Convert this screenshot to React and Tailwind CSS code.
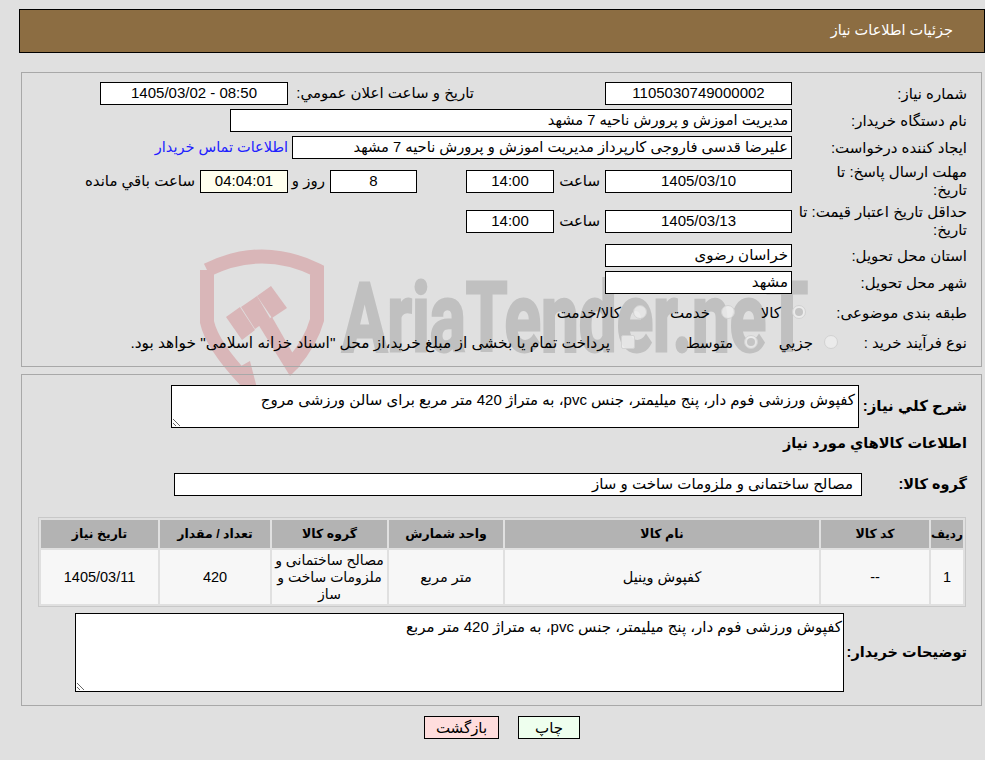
const fontStack = { fontFamily: '"Liberation Sans", "DejaVu Sans", sans-serif' };

function Box({ className = "", bg = "bg-white", children }) {
  return (
    <div className={`flex h-[23px] shrink-0 items-center justify-center whitespace-nowrap border border-black text-[15px] ${bg} ${className}`}>
      {children}
    </div>
  );
}

function Label({ children }) {
  return <div className="w-[175px] shrink-0 text-[15px] leading-[18px]">{children}</div>;
}

function Radio({ checked }) {
  return (
    <span className="mb-[2px] flex h-[14px] w-[14px] shrink-0 items-center justify-center rounded-full border border-[#d2d2d2] bg-[#ededed]/80">
      {checked && <span className="h-[8px] w-[8px] rounded-full bg-[#c4c4c4]" />}
    </span>
  );
}

function Watermark() {
  return (
    <svg className="absolute left-0 top-0" width="985" height="400" viewBox="0 0 985 400">
      <g fill="none" stroke="#d9b6b8" strokeWidth="14">
        <path d="M207 270 Q262 243 317 270 L317 320 Q311 342 292 364" />
        <path d="M207 270 L207 322 Q212 345 245 380" />
      </g>
      <g fill="#d9b6b8">
        <polygon points="226,317 240,307 255,330 242,340" />
        <polygon points="241,307 257,296 270,318 255,329" />
        <polygon points="257,296 271,286 287,308 272,318" />
        <polygon points="258,324 272,317 300,366 290,376" />
        <polygon points="241,366 250,361 257,388 240,388" />
      </g>
      <text
        direction="ltr"
        x="342"
        y="351"
        textLength="466"
        lengthAdjust="spacingAndGlyphs"
        fontFamily="Roboto, sans-serif"
        fontWeight="700"
        fontSize="96"
        fill="#c0c0c0"
        stroke="#c0c0c0"
        strokeWidth="3"
      >
        AriaTender.neT
      </text>
    </svg>
  );
}

const columns = [
  { title: "ردیف", width: "w-[32px]", head: "text-[12px]", cell: "text-[14.5px]", value: "1" },
  { title: "کد کالا", width: "w-[108px]", head: "text-[12.5px]", cell: "text-[14.5px]", value: "--" },
  { title: "نام کالا", width: "w-[314px]", head: "text-[12.5px]", cell: "text-[14.5px]", value: "کفپوش وینیل" },
  { title: "واحد شمارش", width: "w-[114px]", head: "text-[12.5px]", cell: "text-[14.5px]", value: "متر مربع" },
  { title: "گروه کالا", width: "w-[115px]", head: "text-[12.5px]", cell: "text-[14px] whitespace-pre-line", value: "مصالح ساختمانی و\nملزومات ساخت و\nساز" },
  { title: "تعداد / مقدار", width: "w-[110px]", head: "text-[12.5px]", cell: "text-[14.5px]", value: "420" },
  { title: "تاریخ نیاز", width: "w-[117px]", head: "text-[12.5px]", cell: "text-[14.5px]", value: "1405/03/11" },
];

export default function App() {
  return (
    <div dir="rtl" style={fontStack} className="relative h-[760px] w-[985px] overflow-hidden bg-[#e0e0e0] text-[15px] text-black">
      <Watermark />

      <div className="relative">
        <div className="ml-[19px] mt-[9px] flex h-[44px] items-center border border-black bg-[#8c6d42] pr-[31px] text-[14.5px] text-white">
          جزئیات اطلاعات نیاز
        </div>

        <div className="ml-[21px] mr-[3px] mt-[19px] flex h-[295px] flex-col border border-[#a8a8a8] pr-[14px] pt-[9px]">
          <div className="flex h-[23px] items-center">
            <Label>شماره نیاز:</Label>
            <Box className="w-[187px]">1105030749000002</Box>
            <div className="mr-[131px] w-[181px] whitespace-nowrap">تاریخ و ساعت اعلان عمومي:</div>
            <Box className="mr-[5px] w-[188px]"><span dir="ltr">1405/03/02 - 08:50</span></Box>
          </div>

          <div className="mt-[4px] flex h-[23px] items-center">
            <Label>نام دستگاه خریدار:</Label>
            <Box className="w-[562px] !justify-start pr-[3px] !text-[14.7px]">مدیریت اموزش و پرورش ناحیه 7 مشهد</Box>
          </div>

          <div className="mt-[4px] flex h-[23px] items-center">
            <Label>ایجاد کننده درخواست:</Label>
            <Box className="w-[500px] !justify-start pr-[3px] !text-[14.7px]">علیرضا قدسی فاروجی کارپرداز مدیریت اموزش و پرورش ناحیه 7 مشهد</Box>
            <a href="#" className="mr-[4px] whitespace-nowrap text-[14.5px] text-[#2020ff]">اطلاعات تماس خریدار</a>
          </div>

          <div className="mt-[4px] flex h-[36px] items-center">
            <Label>مهلت ارسال پاسخ: تا<br />تاریخ:</Label>
            <Box className="w-[187px]">1405/03/10</Box>
            <div className="w-[51px] shrink-0 pr-[5px]">ساعت</div>
            <Box className="w-[88px]">14:00</Box>
            <Box className="mr-[49px] w-[87px]">8</Box>
            <div className="w-[42px] shrink-0 pr-[5px]">روز و</div>
            <Box bg="bg-[#ffffee]" className="w-[88px]">04:04:01</Box>
            <div className="mr-[5px] whitespace-nowrap">ساعت باقي مانده</div>
          </div>

          <div className="mt-[4px] flex h-[36px] items-center">
            <Label>حداقل تاریخ اعتبار قیمت: تا<br />تاریخ:</Label>
            <Box className="w-[187px]">1405/03/13</Box>
            <div className="w-[51px] shrink-0 pr-[5px]">ساعت</div>
            <Box className="w-[88px]">14:00</Box>
          </div>

          <div className="mt-[5px] flex h-[23px] items-center">
            <Label>استان محل تحویل:</Label>
            <Box className="w-[187px] !justify-start pr-[3px]">خراسان رضوی</Box>
          </div>

          <div className="mt-[4px] flex h-[23px] items-center">
            <Label>شهر محل تحویل:</Label>
            <Box className="w-[187px] !justify-start pr-[3px]">مشهد</Box>
          </div>

          <div className="mt-[4px] flex h-[30px] items-center">
            <div className="w-[161px] shrink-0">طبقه بندی موضوعی:</div>
            <Radio checked />
            <div className="mr-[11px] w-[46px] shrink-0">کالا</div>
            <Radio />
            <div className="mr-[11px] w-[63px] shrink-0">خدمت</div>
            <Radio />
            <div className="mr-[12px] whitespace-nowrap">کالا/خدمت</div>
          </div>

          <div className="flex h-[30px] items-center">
            <div className="w-[129px] shrink-0">نوع فرآیند خرید :</div>
            <Radio />
            <div className="mr-[11px] w-[55px] shrink-0">جزيي</div>
            <Radio checked />
            <div className="mr-[11px] w-[98px] shrink-0">متوسط</div>
            <span className="mb-[2px] h-[14px] w-[14px] shrink-0 rounded-[2px] border border-[#d2d2d2] bg-[#ededed]/80" />
            <div className="mr-[11px] whitespace-nowrap text-[15.4px]">پرداخت تمام یا بخشی از مبلغ خرید،از محل "اسناد خزانه اسلامی" خواهد بود.</div>
          </div>
        </div>

        <div className="ml-[21px] mr-[3px] mt-[7px] h-[332px] border border-[#a8a8a8] pr-[14px] pt-[10px]">
          <div className="flex h-[43px] items-center">
            <div className="w-[108px] shrink-0 whitespace-nowrap text-[15px] font-bold">شرح کلي نياز:</div>
            <textarea
              readOnly
              className="h-[43px] w-[688px] resize border border-black bg-white px-[3px] pt-[3px] text-[15px] outline-none"
              value="کفپوش ورزشی فوم دار، پنج میلیمتر، جنس pvc، به متراژ 420 متر مربع برای سالن ورزشی مروج"
            />
          </div>

          <div className="mt-[6px] text-[14.5px] font-bold leading-[18px]">اطلاعات کالاهاي مورد نياز</div>

          <div className="mt-[21px] flex h-[23px] items-center">
            <div className="w-[105px] shrink-0 whitespace-nowrap text-[14.5px] font-bold">گروه کالا:</div>
            <Box className="w-[688px] !justify-start pr-[8px]">مصالح ساختمانی و ملزومات ساخت و ساز</Box>
          </div>

          <table className="ml-[16px] mr-[1px] mt-[21px] w-[928px] table-fixed border-separate border-spacing-[2px] border border-[#c8c8c8] text-center">
            <thead>
              <tr>
                {columns.map((col) => (
                  <th key={col.title} className={`${col.width} ${col.head} h-[28px] whitespace-nowrap bg-[#b3b3b3] p-0 font-bold`}>
                    {col.title}
                  </th>
                ))}
              </tr>
            </thead>
            <tbody>
              <tr>
                {columns.map((col) => (
                  <td key={col.title} className={`${col.cell} h-[54px] bg-[#f7f7f7] p-0 leading-[17px]`}>
                    {col.value}
                  </td>
                ))}
              </tr>
            </tbody>
          </table>

          <div className="mt-[6px] flex h-[79px] items-center">
            <div className="w-[123px] shrink-0 whitespace-nowrap text-[14.5px] font-bold">توضیحات خریدار:</div>
            <textarea
              readOnly
              className="h-[79px] w-[769px] resize border border-black bg-white px-[1px] pt-[2px] text-[15px] outline-none"
              value="کفپوش ورزشی فوم دار، پنج میلیمتر، جنس pvc، به متراژ 420 متر مربع"
            />
          </div>
        </div>

        <div className="mt-[10px] flex justify-center gap-[19px] pl-[19px]">
          <button type="button" className="h-[23px] w-[62px] border border-black bg-[#eeffee] text-[15px]">چاپ</button>
          <button type="button" className="h-[23px] w-[75px] border border-black bg-[#ffdddd] text-[15px]">بازگشت</button>
        </div>
      </div>
    </div>
  );
}
